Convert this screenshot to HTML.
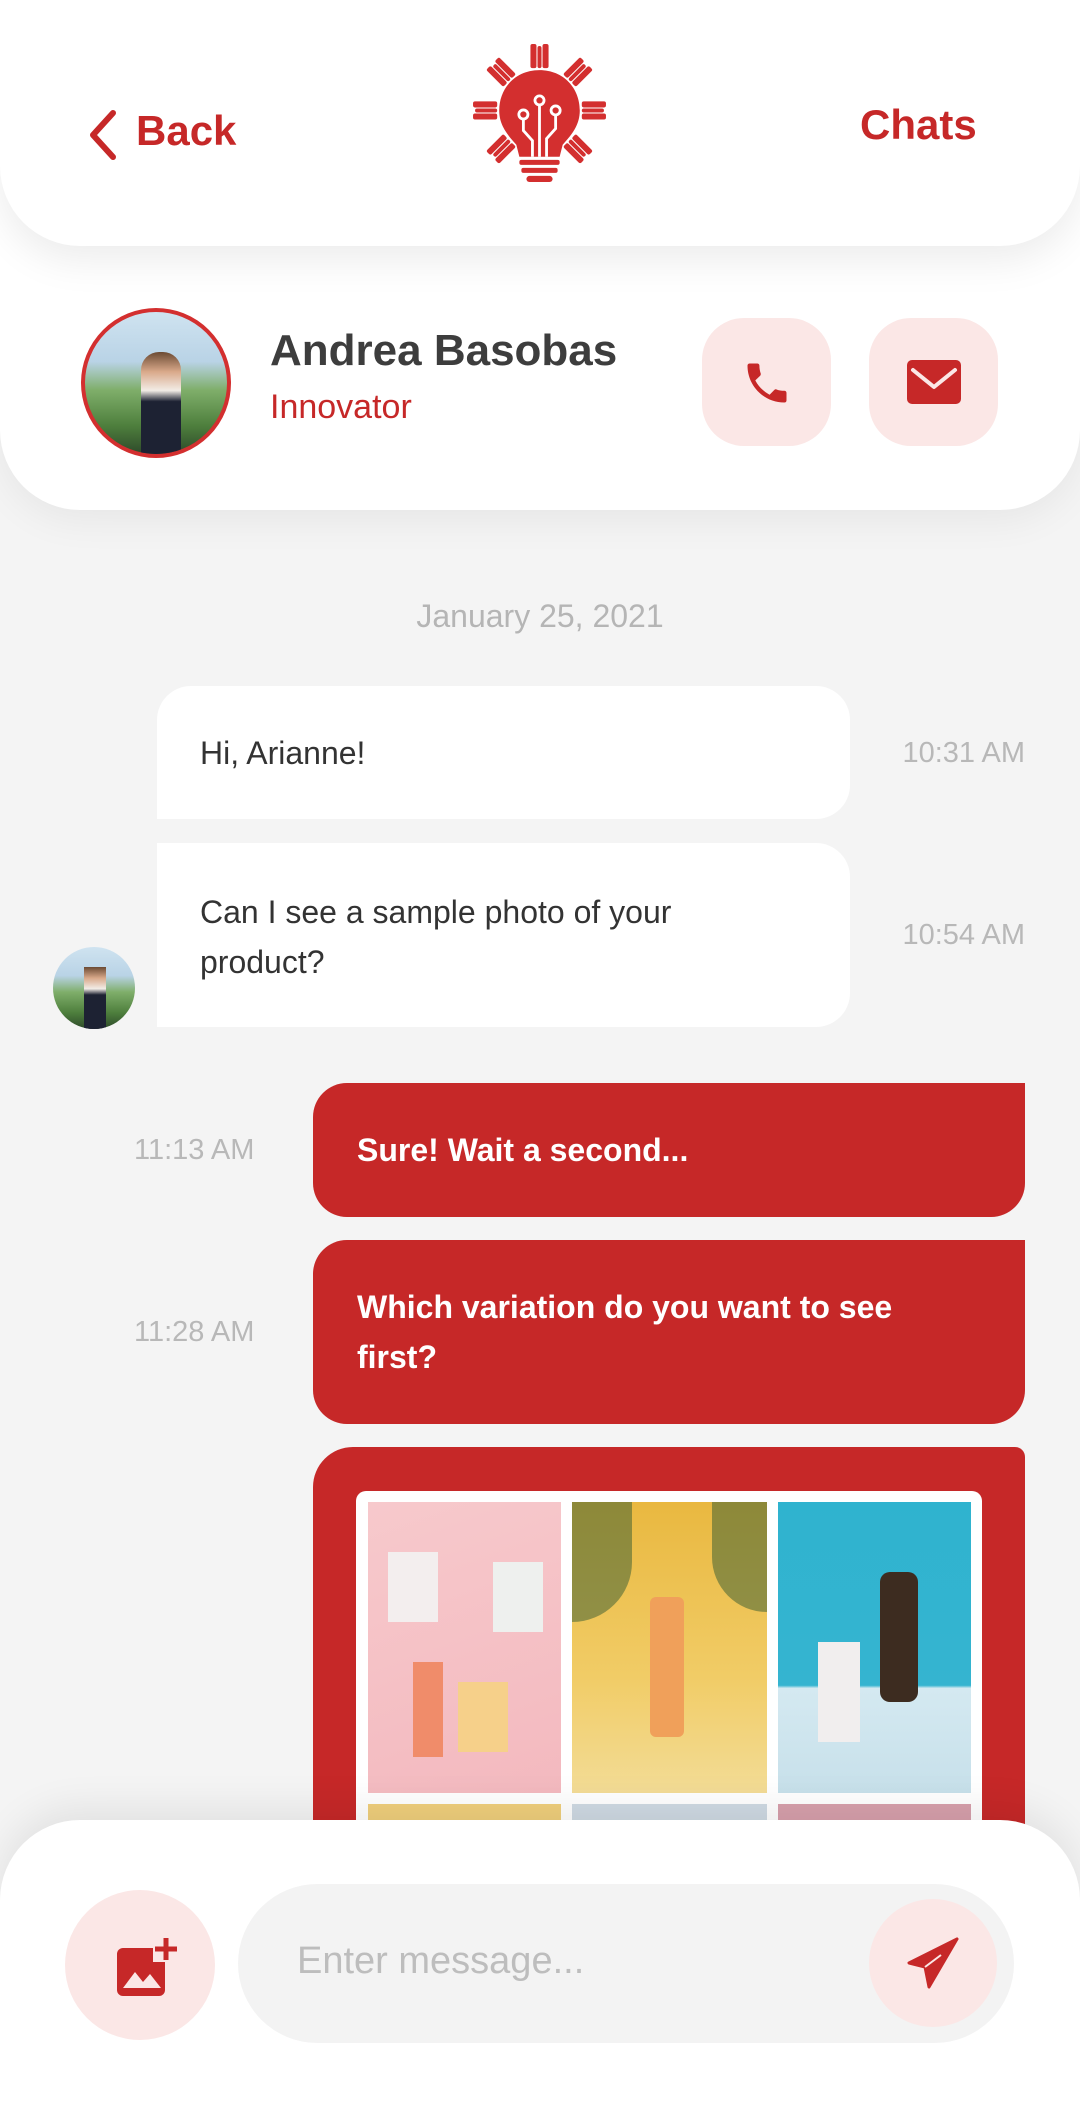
<!DOCTYPE html>
<html><head><meta charset="utf-8"><style>
*{margin:0;padding:0;box-sizing:border-box}
body{width:1080px;height:2106px;background:#f4f4f4;font-family:"Liberation Sans",sans-serif;position:relative;overflow:hidden}
.abs{position:absolute}
.t{position:absolute;white-space:nowrap}
.red{color:#c62828}
.time{color:#b8b8b8;font-size:29px}
.bub{position:absolute;background:#fff;border-radius:34px;color:#333;font-size:32px;line-height:50px}
.rb{position:absolute;background:#c62828;border-radius:34px 0 34px 34px;color:#fff;font-size:32px;line-height:50px;font-weight:bold}
</style></head><body>
<div class="abs" style="left:0;top:0;width:1080px;height:510px;background:#fff;border-radius:0 0 80px 80px;box-shadow:0 10px 40px rgba(0,0,0,0.06)"></div>
<div class="abs" style="left:0;top:0;width:1080px;height:246px;background:#fff;border-radius:0 0 80px 80px;box-shadow:0 14px 40px rgba(0,0,0,0.08)"></div>
<svg class="abs" style="left:86px;top:109px" width="34" height="52" viewBox="0 0 34 52"><path d="M27 4 L7 26 L27 48" fill="none" stroke="#c62828" stroke-width="6" stroke-linecap="round" stroke-linejoin="round"/></svg>
<div class="t red" style="left:136px;top:107px;font-size:42px;font-weight:bold">Back</div>
<div class="t red" style="left:860px;top:101px;font-size:42px;font-weight:bold">Chats</div>
<svg class="abs" style="left:469px;top:44px" width="141" height="141" viewBox="0 0 140 140">
<g fill="#d32f2f">
<g id="r"><rect x="61" y="0" width="6" height="24" rx="2"/><rect x="68" y="2" width="4" height="22" rx="2"/><rect x="73" y="0" width="6" height="24" rx="2"/></g>
<use href="#r" transform="rotate(45 70 66)"/><use href="#r" transform="rotate(90 70 66)"/><use href="#r" transform="rotate(135 70 66)"/>
<use href="#r" transform="rotate(225 70 66)"/><use href="#r" transform="rotate(270 70 66)"/><use href="#r" transform="rotate(315 70 66)"/>
<path d="M70 26 C46 26 30 44 30 66 C30 82 40 92 47 100 L50 112 L90 112 L93 100 C100 92 110 82 110 66 C110 44 94 26 70 26Z"/>
<rect x="50" y="115" width="40" height="5" rx="2"/><rect x="52" y="123" width="36" height="5" rx="2"/><rect x="57" y="131" width="26" height="6" rx="3"/>
</g>
<g fill="none" stroke="#fff" stroke-width="2.8">
<circle cx="70" cy="56" r="4.5"/><circle cx="54" cy="70" r="4.5"/><circle cx="86" cy="66" r="4.5"/>
<path d="M70 61 V112 M54 75 V86 L63 96 V112 M86 71 V84 L77 94 V112"/>
</g></svg>
<div class="abs" style="left:81px;top:308px;width:150px;height:150px;border-radius:50%;border:4px solid #d32f2f;background:linear-gradient(180deg,#cfe3f0 0%,#b9d3e6 35%,#7fae6a 55%,#4e7f3d 80%,#2e4a2a 100%);overflow:hidden">
<div class="abs" style="left:56px;top:40px;width:40px;height:110px;background:linear-gradient(180deg,#6b4a33 0,#d9a98a 18%,#f2ece6 35%,#1d2233 45%,#1d2233 100%);border-radius:18px 18px 0 0"></div></div>
<div class="t" style="left:270px;top:326px;font-size:44px;font-weight:bold;color:#3d3d3d">Andrea Basobas</div>
<div class="t red" style="left:270px;top:388px;font-size:34px">Innovator</div>
<div class="abs" style="left:702px;top:318px;width:129px;height:128px;border-radius:42px;background:#fbe7e6"></div>
<svg class="abs" style="left:741px;top:357px" width="52" height="52" viewBox="0 0 24 24"><path fill="#c62828" d="M6.6 10.8c1.4 2.8 3.8 5.1 6.6 6.6l2.2-2.2c.3-.3.7-.4 1-.2 1.1.4 2.3.6 3.6.6.6 0 1 .4 1 1V20c0 .6-.4 1-1 1C10.6 21 3 13.4 3 4c0-.6.4-1 1-1h3.5c.6 0 1 .4 1 1 0 1.3.2 2.5.6 3.6.1.3 0 .7-.2 1L6.6 10.8z"/></svg>
<div class="abs" style="left:869px;top:318px;width:129px;height:128px;border-radius:42px;background:#fbe7e6"></div>
<svg class="abs" style="left:907px;top:360px" width="54" height="46" viewBox="0 0 54 46"><rect x="0" y="0" width="54" height="44" rx="5" fill="#c62828"/><path d="M6 10 L27 27 L48 10" fill="none" stroke="#fbe7e6" stroke-width="4" stroke-linecap="round" stroke-linejoin="round"/></svg>
<div class="t" style="left:0;width:1080px;text-align:center;top:598px;font-size:32px;color:#b5b5b5">January 25, 2021</div>
<div class="bub" style="left:157px;top:686px;width:693px;height:133px;border-radius:34px 34px 34px 0"><div class="t" style="left:43px;top:42px;font-size:32px">Hi, Arianne!</div></div>
<div class="t time" style="right:55px;top:737px">10:31 AM</div>
<div class="bub" style="left:157px;top:843px;width:693px;height:184px;border-radius:0 34px 34px 0;padding:44px 43px 0">Can I see a sample photo of your<br>product?</div>
<div class="t time" style="right:55px;top:919px">10:54 AM</div>
<div class="abs" style="left:53px;top:947px;width:82px;height:82px;border-radius:50%;background:linear-gradient(180deg,#cfe3f0 0%,#b9d3e6 35%,#7fae6a 55%,#4e7f3d 80%,#2e4a2a 100%);overflow:hidden"><div class="abs" style="left:31px;top:20px;width:22px;height:62px;background:linear-gradient(180deg,#6b4a33 0,#d9a98a 18%,#f2ece6 35%,#1d2233 45%)"></div></div>
<div class="t time" style="left:134px;top:1134px">11:13 AM</div>
<div class="rb" style="left:313px;top:1083px;width:712px;height:134px;padding:42px 44px 0">Sure! Wait a second...</div>
<div class="t time" style="left:134px;top:1316px">11:28 AM</div>
<div class="rb" style="left:313px;top:1240px;width:712px;height:184px;border-radius:0 0 34px 34px;padding:42px 44px 0;border-top-left-radius:34px">Which variation do you want to see<br>first?</div>
<div class="rb" style="left:313px;top:1447px;width:712px;height:500px;border-radius:40px 10px 0 0"></div>
<div class="abs" style="left:356px;top:1491px;width:626px;height:420px;background:#fff;border-radius:10px"></div>
<div class="abs" style="left:368px;top:1502px;width:193px;height:291px;background:linear-gradient(160deg,#f7c9cc,#f3b9bf)"><div class="abs" style="left:20px;top:50px;width:50px;height:70px;background:#f3eeee"></div><div class="abs" style="left:125px;top:60px;width:50px;height:70px;background:#eef0ee"></div><div class="abs" style="left:45px;top:160px;width:30px;height:95px;background:#f08c6a"></div><div class="abs" style="left:90px;top:180px;width:50px;height:70px;background:#f6d08a"></div></div>
<div class="abs" style="left:572px;top:1502px;width:195px;height:291px;background:linear-gradient(180deg,#e9b840,#f1cc66 60%,#f3dc96)"><div class="abs" style="left:78px;top:95px;width:34px;height:140px;background:#f0a05a;border-radius:6px"></div><div class="abs" style="left:0;top:0;width:60px;height:120px;background:rgba(50,90,50,0.5);border-radius:0 0 60px 0"></div><div class="abs" style="left:140px;top:0;width:55px;height:110px;background:rgba(50,90,50,0.5);border-radius:0 0 0 55px"></div></div>
<div class="abs" style="left:778px;top:1502px;width:193px;height:291px;background:linear-gradient(180deg,#2fb3cf 0%,#35b4d0 63%,#d4e9f1 64%,#c7e0ea 100%)"><div class="abs" style="left:102px;top:70px;width:38px;height:130px;background:#3d2c20;border-radius:10px"></div><div class="abs" style="left:40px;top:140px;width:42px;height:100px;background:#f1eeee"></div></div>
<div class="abs" style="left:368px;top:1804px;width:193px;height:40px;background:#f0cf7c"></div>
<div class="abs" style="left:572px;top:1804px;width:195px;height:40px;background:#cfdae3"></div>
<div class="abs" style="left:778px;top:1804px;width:193px;height:40px;background:#d7a0ac"></div>
<div class="abs" style="left:0;top:1820px;width:1080px;height:300px;background:#fff;border-radius:80px 80px 0 0;box-shadow:0 -12px 40px rgba(0,0,0,0.08)"></div>
<div class="abs" style="left:65px;top:1890px;width:150px;height:150px;border-radius:50%;background:#fbe7e6"></div>
<svg class="abs" style="left:115px;top:1936px" width="66" height="62" viewBox="0 0 66 62"><rect x="2" y="12" width="48" height="48" rx="6" fill="#c62828"/><path d="M8 52 L20 36 L28 46 L35 38 L46 52Z" fill="#fbe7e6"/><rect x="38" y="0" width="26" height="26" fill="#fbe7e6"/><path d="M51 2 V24 M40 13 H62" stroke="#c62828" stroke-width="5"/></svg>
<div class="abs" style="left:238px;top:1884px;width:776px;height:159px;border-radius:80px;background:#f3f3f3"></div>
<div class="t" style="left:297px;top:1940px;font-size:38px;color:#bdbdbd">Enter message...</div>
<div class="abs" style="left:869px;top:1899px;width:128px;height:128px;border-radius:50%;background:#fbe7e6"></div>
<svg class="abs" style="left:905px;top:1935px" width="56" height="56" viewBox="0 0 56 56"><path d="M52 4 L4 28 L20 32 Z M52 4 L24 52 L20 32 Z" fill="#c62828" stroke="#c62828" stroke-width="3" stroke-linejoin="round"/><path d="M20 32 L36 20" stroke="#fbe7e6" stroke-width="2"/></svg>
</body></html>
